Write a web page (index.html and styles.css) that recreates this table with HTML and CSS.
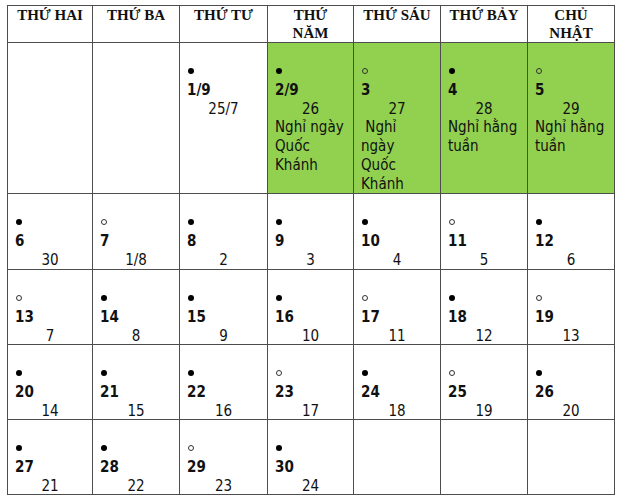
FILE: index.html
```html
<!DOCTYPE html>
<html lang="vi">
<head>
<meta charset="utf-8">
<title>Lịch tháng 9</title>
<link rel="stylesheet" href="styles.css">
</head>
<body>
<div class="cal">
  <div class="hd">THỨ HAI</div>
  <div class="hd">THỨ BA</div>
  <div class="hd">THỨ TƯ</div>
  <div class="hd">THỨ<br>NĂM</div>
  <div class="hd">THỨ SÁU</div>
  <div class="hd">THỨ BẢY</div>
  <div class="hd">CHỦ<br>NHẬT</div>

  <div class="cell"></div>
  <div class="cell"></div>
  <div class="cell"><div class="m"><span class="dot"></span></div><div class="d">1/9</div><div class="l">25/7</div></div>
  <div class="cell g"><div class="m"><span class="dot"></span></div><div class="d">2/9</div><div class="l">26</div><div class="n">Nghỉ ngày<br>Quốc<br>Khánh</div></div>
  <div class="cell g"><div class="m"><span class="ring"></span></div><div class="d">3</div><div class="l">27</div><div class="n">&nbsp;Nghỉ<br>ngày<br>Quốc<br>Khánh</div></div>
  <div class="cell g"><div class="m"><span class="dot"></span></div><div class="d">4</div><div class="l">28</div><div class="n">Nghỉ hằng<br>tuần</div></div>
  <div class="cell g"><div class="m"><span class="ring"></span></div><div class="d">5</div><div class="l">29</div><div class="n">Nghỉ hằng<br>tuần</div></div>

  <div class="cell"><div class="m"><span class="dot"></span></div><div class="d">6</div><div class="l">30</div></div>
  <div class="cell"><div class="m"><span class="ring"></span></div><div class="d">7</div><div class="l">1/8</div></div>
  <div class="cell"><div class="m"><span class="dot"></span></div><div class="d">8</div><div class="l">2</div></div>
  <div class="cell"><div class="m"><span class="dot"></span></div><div class="d">9</div><div class="l">3</div></div>
  <div class="cell"><div class="m"><span class="dot"></span></div><div class="d">10</div><div class="l">4</div></div>
  <div class="cell"><div class="m"><span class="ring"></span></div><div class="d">11</div><div class="l">5</div></div>
  <div class="cell"><div class="m"><span class="dot"></span></div><div class="d">12</div><div class="l">6</div></div>

  <div class="cell"><div class="m"><span class="ring"></span></div><div class="d">13</div><div class="l">7</div></div>
  <div class="cell"><div class="m"><span class="dot"></span></div><div class="d">14</div><div class="l">8</div></div>
  <div class="cell"><div class="m"><span class="dot"></span></div><div class="d">15</div><div class="l">9</div></div>
  <div class="cell"><div class="m"><span class="dot"></span></div><div class="d">16</div><div class="l">10</div></div>
  <div class="cell"><div class="m"><span class="ring"></span></div><div class="d">17</div><div class="l">11</div></div>
  <div class="cell"><div class="m"><span class="dot"></span></div><div class="d">18</div><div class="l">12</div></div>
  <div class="cell"><div class="m"><span class="ring"></span></div><div class="d">19</div><div class="l">13</div></div>

  <div class="cell"><div class="m"><span class="dot"></span></div><div class="d">20</div><div class="l">14</div></div>
  <div class="cell"><div class="m"><span class="dot"></span></div><div class="d">21</div><div class="l">15</div></div>
  <div class="cell"><div class="m"><span class="dot"></span></div><div class="d">22</div><div class="l">16</div></div>
  <div class="cell"><div class="m"><span class="ring"></span></div><div class="d">23</div><div class="l">17</div></div>
  <div class="cell"><div class="m"><span class="dot"></span></div><div class="d">24</div><div class="l">18</div></div>
  <div class="cell"><div class="m"><span class="ring"></span></div><div class="d">25</div><div class="l">19</div></div>
  <div class="cell"><div class="m"><span class="dot"></span></div><div class="d">26</div><div class="l">20</div></div>

  <div class="cell"><div class="m"><span class="dot"></span></div><div class="d">27</div><div class="l">21</div></div>
  <div class="cell"><div class="m"><span class="dot"></span></div><div class="d">28</div><div class="l">22</div></div>
  <div class="cell"><div class="m"><span class="ring"></span></div><div class="d">29</div><div class="l">23</div></div>
  <div class="cell"><div class="m"><span class="dot"></span></div><div class="d">30</div><div class="l">24</div></div>
  <div class="cell"></div>
  <div class="cell"></div>
  <div class="cell"></div>
</div>
</body>
</html>
```
FILE: styles.css
```css
html, body {
  margin: 0;
  padding: 0;
  background: #ffffff;
}

.cal {
  margin: 5px 0 0 7px;
  width: 608px;
  box-sizing: border-box;
  display: grid;
  grid-template-columns: 84px 86px 87px 85px 86px 86px 86px;
  grid-template-rows: 36px 150px 75px 74px 74px 74px;
  gap: 1px;
  padding: 1px;
  background: #4d4d4d;
}

.hd {
  background: #ffffff;
  font-family: "Liberation Serif", "Times New Roman", serif;
  font-weight: bold;
  font-size: 15px;
  line-height: 17.5px;
  text-align: center;
  color: #111111;
  padding-top: 1px;
}

.cell {
  background: #ffffff;
  font-family: "DejaVu Sans", Tahoma, sans-serif;
  font-stretch: condensed;
  font-size: 15px;
  line-height: 18.8px;
  color: #111111;
  padding: 19px 7px 0 7px;
  overflow: hidden;
}

.cell.g {
  background: #92d050;
}

.m {
  height: 18.8px;
  display: flex;
  align-items: center;
  padding-left: 1px;
}

.dot,
.ring {
  display: block;
  width: 6px;
  height: 6px;
  border-radius: 50%;
  box-sizing: border-box;
}

.dot {
  background: #000000;
}

.ring {
  border: 1px solid #333333;
}

.d {
  font-weight: bold;
}

.l {
  text-align: center;
}

.n {
  text-align: left;
  white-space: nowrap;
}
```
